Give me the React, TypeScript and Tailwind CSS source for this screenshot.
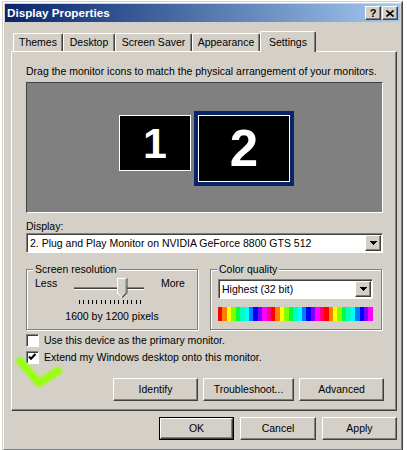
import React from 'react';

const raised =
  'border border-t-white border-l-white border-r-[#404040] border-b-[#404040] shadow-[inset_-1px_-1px_0_#808080]';
const sunken =
  'border border-t-[#808080] border-l-[#808080] border-r-white border-b-white shadow-[inset_1px_1px_0_#404040]';

const stripeColors = [
  'bg-[#ff0000]',
  'bg-[#ff8000]',
  'bg-[#ffff00]',
  'bg-[#80ff00]',
  'bg-[#00ff40]',
  'bg-[#00ffc0]',
  'bg-[#00ffff]',
  'bg-[#0080ff]',
  'bg-[#0000ff]',
  'bg-[#8000ff]',
  'bg-[#ff00ff]',
  'bg-[#ff0080]',
];

function Arrow() {
  return (
    <svg width="7" height="4" viewBox="0 0 7 4" shapeRendering="crispEdges">
      <rect x="0" y="0" width="7" height="1" fill="#000" />
      <rect x="1" y="1" width="5" height="1" fill="#000" />
      <rect x="2" y="2" width="3" height="1" fill="#000" />
      <rect x="3" y="3" width="1" height="1" fill="#000" />
    </svg>
  );
}

function Select({ text, className = '' }: { text: string; className?: string }) {
  return (
    <div className={`flex h-[20px] items-center bg-white p-px ${sunken} ${className}`}>
      <span className="flex-1 truncate pl-[2px] leading-[16px]">{text}</span>
      <div className={`flex h-[16px] w-[16px] items-center justify-center bg-[#d4d0c8] ${raised}`}>
        <Arrow />
      </div>
    </div>
  );
}

function Button({ children, w, isDefault }: { children: React.ReactNode; w: string; isDefault?: boolean }) {
  if (isDefault) {
    return (
      <div className={`h-[23px] border border-black ${w}`}>
        <div className={`flex h-full w-full items-center justify-center bg-[#d4d0c8] ${raised}`}>{children}</div>
      </div>
    );
  }
  return (
    <div className={`flex h-[23px] items-center justify-center bg-[#d4d0c8] ${raised} ${w}`}>{children}</div>
  );
}

function Checkbox({ checked, label }: { checked?: boolean; label: string }) {
  return (
    <div className="flex h-[13px] items-center gap-[5px]">
      <div className={`h-[13px] w-[13px] bg-white ${sunken}`}>
        {checked && (
          <svg width="11" height="11" viewBox="0 0 11 11">
            <polyline points="2,4.5 4,6.8 8.5,2" fill="none" stroke="#000" strokeWidth="2" />
          </svg>
        )}
      </div>
      <span className="leading-[13px]">{label}</span>
    </div>
  );
}

function Slider() {
  const ticks = Array.from({ length: 15 }, (_, i) => 5 + (i * 61) / 14);
  return (
    <svg width="70" height="28" viewBox="0 0 70 28" shapeRendering="crispEdges">
      <rect x="0" y="10" width="70" height="1" fill="#808080" />
      <rect x="0" y="11" width="70" height="1" fill="#404040" />
      <rect x="0" y="12" width="70" height="1" fill="#ffffff" />
      {ticks.map((x, i) => (
        <rect key={i} x={Math.round(x)} y="23" width="1" height="4" fill="#000" />
      ))}
      <g transform="translate(43,1)">
        <polygon points="0,0 10,0 10,15 5,20 0,15" fill="#d4d0c8" />
        <polyline points="0,15 0,0 10,0" fill="none" stroke="#fff" strokeWidth="1" transform="translate(0.5,0.5)" />
        <polyline points="10,0 10,15 5,20" fill="none" stroke="#404040" strokeWidth="1" shapeRendering="auto" />
        <polyline points="9,1 9,15 5,19" fill="none" stroke="#808080" strokeWidth="1" shapeRendering="auto" />
        <polyline points="0.5,15 5,19.5" fill="none" stroke="#fff" strokeWidth="1" shapeRendering="auto" />
      </g>
    </svg>
  );
}

const tabs = [
  { label: 'Themes', w: 'w-[50px]' },
  { label: 'Desktop', w: 'w-[52px]' },
  { label: 'Screen Saver', w: 'w-[77px]' },
  { label: 'Appearance', w: 'w-[68px]' },
];

export default function App() {
  return (
    <div className="relative h-[450px] w-[407px] overflow-hidden bg-white font-['Liberation_Sans',Arial,sans-serif] text-[10.5px] text-black">
      <div className="ml-[2px] mt-[1px] h-[450px] w-[401px] border border-t-[#d4d0c8] border-l-[#d4d0c8] border-r-[#404040] border-b-[#404040] bg-[#d4d0c8]">
        <div className="h-full w-full border border-t-white border-l-white border-r-[#808080] border-b-[#808080] p-px">
          {/* title bar */}
          <div className="flex h-[18px] items-center bg-linear-to-r from-[#0a246a] to-[#a6caf0] pl-[2px] pr-[2px]">
            <span className="flex-1 text-[11.7px] font-bold text-white">Display Properties</span>
            <div className={`flex h-[14px] w-[16px] items-center justify-center bg-[#d4d0c8] text-[11px] font-bold leading-none ${raised}`}>
              ?
            </div>
            <div className={`ml-[1px] flex h-[14px] w-[16px] items-center justify-center bg-[#d4d0c8] ${raised}`}>
              <svg width="8" height="7" viewBox="0 0 8 7">
                <path d="M0.5 0.5L7.5 6.5M7.5 0.5L0.5 6.5" stroke="#000" strokeWidth="1.6" />
              </svg>
            </div>
          </div>

          <div className="pl-[6px] pt-[9px]">
            {/* tabs */}
            <div className="flex items-end pl-[2px]">
              {tabs.map((t) => (
                <div
                  key={t.label}
                  className={`flex h-[18px] items-center justify-center rounded-t-[2px] border-t border-l border-r border-t-white border-l-white border-r-[#404040] shadow-[inset_-1px_0_0_#808080] ${t.w}`}
                >
                  {t.label}
                </div>
              ))}
              <div className="relative z-10 -mb-px flex h-[21px] w-[56px] items-start justify-center rounded-t-[2px] border-t border-l border-r border-t-white border-l-white border-r-[#404040] bg-[#d4d0c8] pt-[3px] shadow-[inset_-1px_0_0_#808080]">
                Settings
              </div>
            </div>

            {/* panel */}
            <div className="h-[360px] w-[386px] border border-t-white border-l-white border-r-[#404040] border-b-[#404040] pl-[14px] pt-[13px] shadow-[inset_-1px_-1px_0_#808080]">
              <p className="leading-[13px]">Drag the monitor icons to match the physical arrangement of your monitors.</p>

              <div className="relative mt-[4px] h-[131px] w-[357px] border border-t-[#404040] border-l-[#404040] border-r-white border-b-white bg-[#808080]">
                <div className="absolute left-[92px] top-[32px] flex h-[56px] w-[72px] items-center justify-center border border-white bg-black text-[43px] font-bold leading-none text-white">
                  1
                </div>
                <div className="absolute left-[167px] top-[28px] h-[75px] w-[100px] border-4 border-[#0a246a]">
                  <div className="flex h-full w-full items-center justify-center border border-white bg-black text-[51px] font-bold leading-none text-white">
                    2
                  </div>
                </div>
              </div>

              <p className="mt-[7px] leading-[13px]">Display:</p>
              <Select text="2. Plug and Play Monitor on NVIDIA GeForce 8800 GTS 512" className="w-[357px]" />

              <div className="mt-[10px] flex gap-[12px]">
                <fieldset className="h-[67px] w-[172px] border border-[#808080] shadow-[inset_1px_1px_0_#fff,1px_1px_0_#fff]">
                  <legend className="ml-[6px] bg-[#d4d0c8] px-[2px] leading-[13px]">Screen resolution</legend>
                  <div className="flex pt-px">
                    <span className="w-[47px] pl-[8px] leading-[13px]">Less</span>
                    <Slider />
                    <span className="ml-[17px] leading-[13px]">More</span>
                  </div>
                  <p className="mt-[5px] text-center leading-[13px]">1600 by 1200 pixels</p>
                </fieldset>

                <fieldset className="h-[67px] w-[172px] border border-[#808080] px-[7px] shadow-[inset_1px_1px_0_#fff,1px_1px_0_#fff]">
                  <legend className="ml-[-1px] bg-[#d4d0c8] px-[2px] leading-[13px]">Color quality</legend>
                  <Select text="Highest (32 bit)" className="mt-[3px] w-[155px]" />
                  <div className="mt-[8px] flex h-[14px] w-[155px]">
                    {Array.from({ length: 35 }, (_, i) => (
                      <div key={i} className={`flex-1 ${stripeColors[i % 12]}`} />
                    ))}
                  </div>
                </fieldset>
              </div>

              <div className="mt-[4px] flex flex-col gap-[4px]">
                <Checkbox label="Use this device as the primary monitor." />
                <Checkbox checked label="Extend my Windows desktop onto this monitor." />
              </div>

              <div className="mt-[14px] flex w-[358px] justify-end gap-[5px]">
                <Button w="w-[85px]">Identify</Button>
                <Button w="w-[91px]">Troubleshoot...</Button>
                <Button w="w-[85px]">Advanced</Button>
              </div>
            </div>

            {/* bottom buttons */}
            <div className="mt-[6px] flex w-[386px] justify-end gap-[6px]">
              <Button w="w-[75px]" isDefault>
                OK
              </Button>
              <Button w="w-[76px]">Cancel</Button>
              <Button w="w-[75px]">Apply</Button>
            </div>
          </div>
        </div>
      </div>

      {/* green annotation tick */}
      <svg className="absolute left-0 top-[350px] blur-[1px]" width="80" height="50" viewBox="0 0 80 50">
        <path d="M20 11 L39 33 L58 21" fill="none" stroke="#99ff11" strokeWidth="8" strokeLinecap="round" strokeLinejoin="round" />
      </svg>
    </div>
  );
}
